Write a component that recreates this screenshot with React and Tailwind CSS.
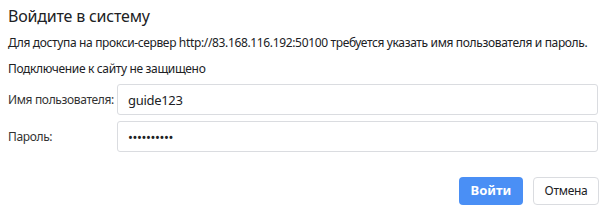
export default function App() {
  return (
    <div
      className="w-[603px] h-[210px] overflow-hidden bg-white text-[#202124] pl-2 pr-[4px] pt-[6px]"
      style={{ fontFamily: '"Segoe UI", "Noto Sans", sans-serif' }}
    >
      <h1 className="text-[16px] leading-[20px] mb-[9px] tracking-[-0.2px]">Войдите в систему</h1>
      <p className="text-[12px] leading-[16px] mb-[10px] whitespace-nowrap tracking-[-0.35px]">
        Для доступа на прокси-сервер http://83.168.116.192:50100 требуется указать имя пользователя и пароль.
      </p>
      <p className="text-[12px] leading-[16px] mb-[7px] whitespace-nowrap tracking-[-0.35px]">
        Подключение к сайту не защищено
      </p>

      <div className="flex flex-col gap-[6px] pr-[1px]">
        <div className="flex items-center">
          <label className="w-[109px] shrink-0 whitespace-nowrap text-[12px] tracking-[-0.35px] text-[#333]">
            Имя пользователя:
          </label>
          <input
            className="flex-1 min-w-0 h-[31px] border border-[#dadce0] rounded-[3px] px-[10px] text-[13px] tracking-[-0.3px] text-[#202124] outline-none"
            defaultValue="guide123"
          />
        </div>
        <div className="flex items-center">
          <label className="w-[109px] shrink-0 whitespace-nowrap text-[12px] tracking-[-0.35px] text-[#333]">
            Пароль:
          </label>
          <input
            type="password"
            className="flex-1 min-w-0 h-[31px] border border-[#dadce0] rounded-[3px] px-[10px] text-[13px] tracking-[-0.4px] text-[#202124] outline-none"
            defaultValue="1234567890"
          />
        </div>
      </div>

      <div className="flex justify-end gap-[10px] mt-[25px]">
        <button className="w-[64px] h-[28px] rounded-[4px] bg-[#4a8ff5] text-white text-[13px] font-bold">
          Войти
        </button>
        <button className="w-[66px] h-[28px] rounded-[4px] border border-[#dadce0] bg-white text-[#202124] text-[12px] tracking-[-0.3px]">
          Отмена
        </button>
      </div>
    </div>
  );
}
